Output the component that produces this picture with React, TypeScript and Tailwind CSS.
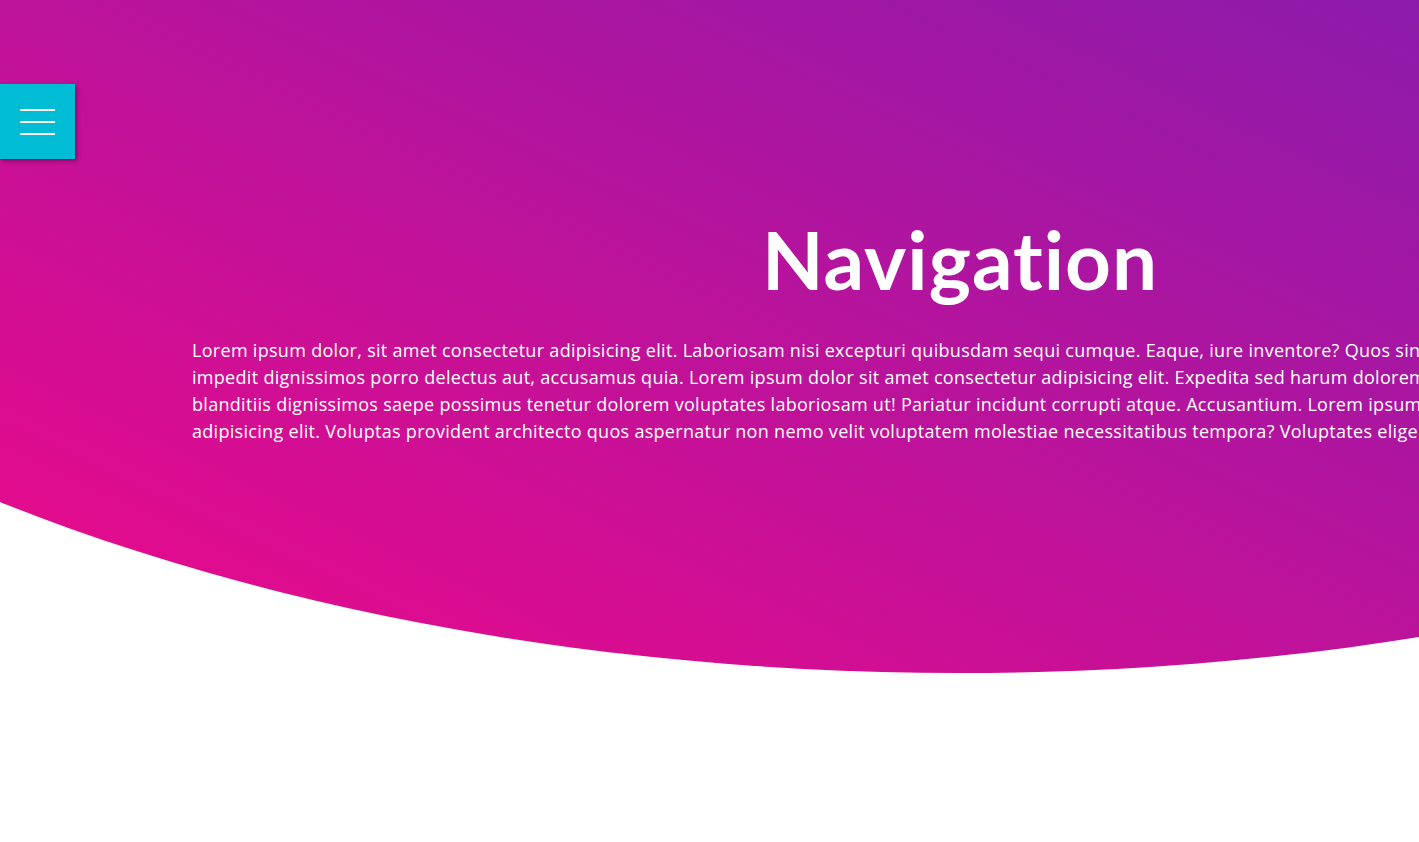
import React from "react";

const lines = [
  "Lorem ipsum dolor, sit amet consectetur adipisicing elit. Laboriosam nisi excepturi quibusdam sequi cumque. Eaque, iure inventore? Quos sint",
  "impedit dignissimos porro delectus aut, accusamus quia. Lorem ipsum dolor sit amet consectetur adipisicing elit. Expedita sed harum dolorem",
  "blanditiis dignissimos saepe possimus tenetur dolorem voluptates laboriosam ut! Pariatur incidunt corrupti atque. Accusantium. Lorem ipsum",
  "adipisicing elit. Voluptas provident architecto quos aspernatur non nemo velit voluptatem molestiae necessitatibus tempora? Voluptates eligendi",
];

export default function App() {
  return (
    <div className="relative h-[842px] w-full overflow-hidden bg-white">
      <header className="h-[673px] w-full overflow-hidden bg-[linear-gradient(to_top_right,#ee0989,#8c1bab)] [clip-path:ellipse(1600px_855px_at_960px_-182px)]">
        <div className="flex w-[1920px] flex-col items-center pt-[211px]">
          <h1 className="font-['Lato','Noto_Sans',sans-serif] text-[80px] font-bold leading-[1.2] tracking-[1px] text-white [font-variant-ligatures:none]">
            Navigation
          </h1>
          <div className="mt-[30px] w-[1536px] font-['Open_Sans','Noto_Sans',sans-serif] text-[18px] leading-[27px] tracking-[0.3px] text-white">
            {lines.map((l) => (
              <p key={l} className="whitespace-nowrap">
                {l}
              </p>
            ))}
          </div>
        </div>
      </header>
      <button className="absolute left-0 top-[84px] flex h-[75px] w-[75px] flex-col items-center justify-center gap-[10px] bg-[#00bcd4] shadow-[2px_2px_4px_rgba(0,0,0,0.35)]">
        <span className="block h-[2px] w-[35px] bg-white" />
        <span className="block h-[2px] w-[35px] bg-white" />
        <span className="block h-[2px] w-[35px] bg-white" />
      </button>
    </div>
  );
}
